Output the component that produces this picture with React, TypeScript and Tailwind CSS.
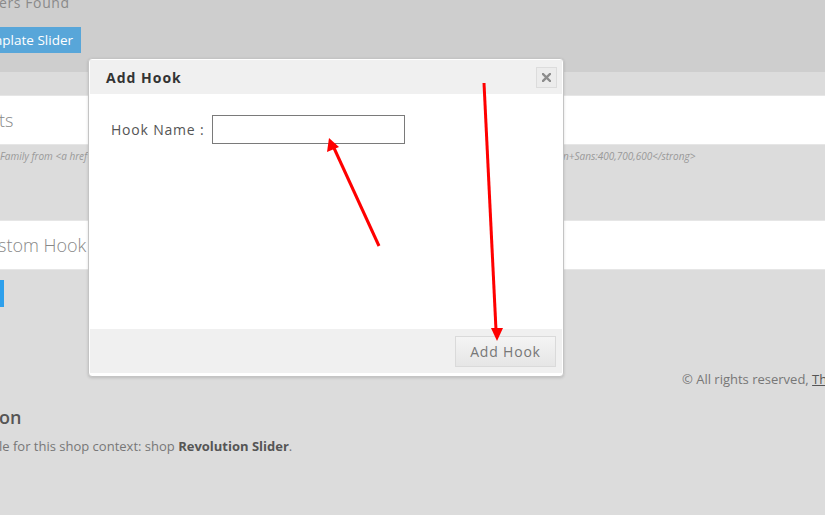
import React from "react";

export default function App() {
  return (
    <div
      className="relative w-[825px] h-[515px] overflow-hidden bg-[#dcdcdc] text-[#777] flex flex-col"
      style={{ fontFamily: '"Open Sans", "Noto Sans", sans-serif' }}
    >
      {/* top band */}
      <div className="h-[72px] shrink-0 bg-[#cecece] flex flex-col items-start">
        <div className="-mt-[7px] -ml-[1px] text-[14px] tracking-[0.6px] leading-[20px] text-[#8a8a8a] whitespace-nowrap">
          ers Found
        </div>
        <div className="mt-[14px] flex items-center h-[26px] w-[81px] bg-[#58a6d9] text-white text-[13.5px] pr-[8px] justify-end whitespace-nowrap overflow-hidden">
          mplate Slider
        </div>
      </div>

      {/* page body */}
      <div className="pt-[23px] flex flex-col">
        <div className="h-[50px] bg-white border-t border-b border-[#e6e6e6] flex items-center">
          <span className="text-[18px] font-light text-[#888] -ml-[1px]">ts</span>
        </div>
        <div className="mt-[4px] flex whitespace-nowrap text-[10px] italic leading-[14px] text-[#999]">
          <span className="w-[563px] overflow-hidden">
            Family from &lt;a href="https://www.google.com/fonts" target="_blank"&gt;Google Fonts&lt;/a&gt;, Example: &lt;strong&gt;Ope
          </span>
          <span>n+Sans:400,700,600&lt;/strong&gt;</span>
        </div>
        <div className="mt-[57px] h-[50px] bg-white border-t border-b border-[#e6e6e6] flex items-center">
          <span className="text-[18px] font-light text-[#888] -ml-[2px] whitespace-nowrap">stom Hook</span>
        </div>
        <div className="mt-[10px] w-[4px] h-[27px] bg-[#2ea0ec]" />
        <div className="mt-[63px] flex justify-end whitespace-nowrap">
          <span className="w-[143px] text-[13px] leading-[18px] text-[#777] overflow-hidden">
            © All rights reserved, <span className="underline text-[#555]">Thirty</span>
          </span>
        </div>
        <div className="mt-[17px] text-[18px] leading-[24px] font-semibold text-[#555] -ml-[1px]">on</div>
        <div className="mt-[8px] text-[13px] leading-[18px] text-[#777] -ml-[1px] whitespace-nowrap">
          le for this shop context: shop <span className="font-bold text-[#555]">Revolution Slider</span>.
        </div>
      </div>

      {/* modal */}
      <div className="absolute left-[88px] top-[58px] w-[476px] h-[319px] bg-white border border-[#c4c4c4] rounded-[4px] shadow-[0_1px_3px_rgba(0,0,0,0.15)] p-[1px] flex flex-col">
        <div className="h-[34px] bg-[#f0f0f0] flex items-center justify-between pl-[16px] pr-[5px]">
          <span className="text-[14px] font-bold tracking-[1px] text-[#333]">Add Hook</span>
          <div className="w-[21px] h-[21px] border border-[#dcdcdc] bg-[#ececec] flex items-center justify-center">
            <svg width="9" height="9" viewBox="0 0 9 9">
              <path d="M1 1 L8 8 M8 1 L1 8" stroke="#8c8c8c" strokeWidth="2.4" strokeLinecap="square" />
            </svg>
          </div>
        </div>
        <div className="flex-1 pt-[21px] pl-[21px]">
          <div className="flex items-center">
            <span className="w-[101px] text-[14px] tracking-[0.8px] text-[#555] whitespace-nowrap">Hook Name :</span>
            <div className="w-[193px] h-[29px] border border-[#7a7a7a] bg-white" />
          </div>
        </div>
        <div className="h-[44px] bg-[#f0f0f0] flex items-start justify-end pt-[7px] pr-[6px] mb-[2px]">
          <div className="w-[101px] h-[31px] border border-[#dadada] bg-gradient-to-b from-[#f4f4f4] to-[#e6e6e6] flex items-center justify-center text-[14px] tracking-[0.8px] text-[#777]">
            Add Hook
          </div>
        </div>
      </div>

      {/* red arrows */}
      <svg className="absolute left-0 top-0 pointer-events-none" width="825" height="515" viewBox="0 0 825 515">
        <line x1="379" y1="246" x2="334" y2="148" stroke="#f00" strokeWidth="3" />
        <polygon points="329,138 327,152 339,147" fill="#f00" />
        <line x1="484" y1="83" x2="496" y2="330" stroke="#f00" strokeWidth="3" />
        <polygon points="497,341 491,328 503,328" fill="#f00" />
      </svg>
    </div>
  );
}
